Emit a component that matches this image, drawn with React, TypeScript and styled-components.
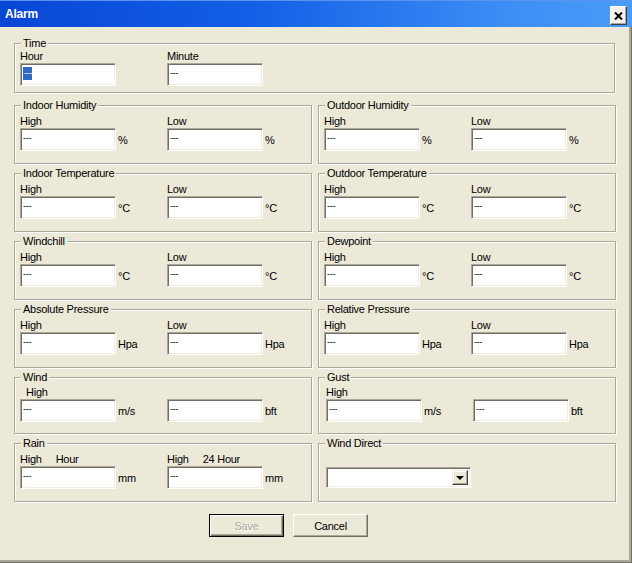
import React from 'react';
import styled, {createGlobalStyle} from 'styled-components';

const GlobalStyle = createGlobalStyle`
  html, body {
    margin: 0;
    padding: 0;
    background: #ECE9D8;
  }
  body {
    font-family: "Liberation Sans", Arial, sans-serif;
    font-size: 11px;
    letter-spacing: -0.25px;
    color: #000;
  }
`

const Window = styled.div`
  width: 632px;
  height: 563px;
  display: flex;
  flex-direction: column;
  background: #ECE9D8;
`

const TitleBar = styled.div`
  height: 27px;
  flex: none;
  display: flex;
  align-items: center;
  justify-content: space-between;
  padding: 0 5px 0 5px;
  box-sizing: border-box;
  background: linear-gradient(to right, #0846d4 0%, #1260e6 40%, #3b8ef5 80%, #4b9cf8 100%);
  box-shadow: inset 0 1px 0 #5b94f0;
`

const Title = styled.span`
  color: #fff;
  font-weight: bold;
  font-size: 12px;
  letter-spacing: -0.2px;
`

const CloseButton = styled.div`
  width: 17px;
  height: 19px;
  margin-top: 4px;
  box-sizing: border-box;
  background: #F4F2EA;
  border: 1px solid;
  border-color: #fff #404040 #404040 #fff;
  box-shadow: inset -1px -1px 0 #ACA899;
  display: flex;
  align-items: center;
  justify-content: center;
`

const Body = styled.div`
  flex: 1;
  padding: 16px 17px 0 14px;
  box-shadow: inset -1px -1px 0 #716F64, inset -3px -3px 0 #ACA899;
`

const Group = styled.div<{h: number; pt: number; pl?: number}>`
  position: relative;
  box-sizing: border-box;
  height: ${p => p.h}px;
  border: 1px solid #ACA899;
  box-shadow: inset 1px 1px 0 #fff, 1px 1px 0 #fff;
  padding: ${p => p.pt}px 0 0 ${p => p.pl ?? 5}px;
`

const Legend = styled.span`
  position: absolute;
  top: -7px;
  left: 6px;
  padding: 0 2px;
  line-height: 13px;
  background: #ECE9D8;
  color: #000;
`

const Grid = styled.div`
  display: grid;
  grid-template-columns: 298px 298px;
  column-gap: 6px;
  row-gap: 9px;
  margin-top: 12px;
`

const Fields = styled.div`
  display: grid;
  grid-template-columns: 147px 1fr;
`

const Label = styled.div<{indent?: number}>`
  height: 13px;
  line-height: 13px;
  padding-left: ${p => p.indent ?? 0}px;
  white-space: pre;
`

const InputRow = styled.div`
  display: flex;
  align-items: center;
`

const TextBox = styled.div<{w?: number}>`
  width: ${p => p.w ?? 96}px;
  height: 23px;
  box-sizing: border-box;
  background: #fff;
  border: 1px solid;
  border-color: #ACA899 #fff #fff #ACA899;
  box-shadow: inset 1px 1px 0 #716F64, inset -1px -1px 0 #F1EFE2;
  padding: 3px 0 0 2px;
  line-height: 13px;
  letter-spacing: -0.3px;
  font-size: 9px;
  flex: none;
`

const Selected = styled.span`
  display: inline-block;
  height: 13px;
  background: #316AC5;
  color: #fff;
  padding: 0 0 0 1px;
`

const Unit = styled.span`
  padding: 1px 0 0 2px;
  font-size: 11px;
`

const Combo = styled.div`
  width: 145px;
  height: 21px;
  margin-top: 23px;
  box-sizing: border-box;
  background: #fff;
  border: 1px solid;
  border-color: #ACA899 #fff #fff #ACA899;
  box-shadow: inset 1px 1px 0 #716F64, inset -1px -1px 0 #F1EFE2;
  display: flex;
  justify-content: flex-end;
  padding: 2px;
`

const ComboButton = styled.div`
  width: 16px;
  box-sizing: border-box;
  background: #ECE9D8;
  border: 1px solid;
  border-color: #F1EFE2 #404040 #404040 #F1EFE2;
  box-shadow: inset -1px -1px 0 #ACA899, inset 1px 1px 0 #fff;
  display: flex;
  align-items: center;
  justify-content: center;
`

const Arrow = styled.div`
  width: 0;
  height: 0;
  border-left: 4px solid transparent;
  border-right: 4px solid transparent;
  border-top: 4px solid #000;
`

const ButtonRow = styled.div`
  display: flex;
  gap: 9px;
  margin: 12px 0 0 195px;
`

const Button = styled.div<{primary?: boolean; disabled?: boolean}>`
  width: 75px;
  height: 23px;
  box-sizing: border-box;
  display: flex;
  align-items: center;
  justify-content: center;
  background: #ECE9D8;
  color: ${p => p.disabled ? '#ACA899' : '#000'};
  text-shadow: ${p => p.disabled ? '1px 1px 0 #fff' : 'none'};
  border: 1px solid;
  border-color: ${p => p.primary ? '#000' : '#fff #716F64 #716F64 #fff'};
  box-shadow: ${p => p.primary
    ? 'inset 1px 1px 0 #fff, inset -1px -1px 0 #716F64, inset -2px -2px 0 #ACA899'
    : 'inset -1px -1px 0 #ACA899'};
`

type FieldProps = {label: string; unit?: string; indent?: number; selected?: boolean}

const Field = ({label, unit, indent, selected}: FieldProps) => (
    <div>
        <Label indent={indent}>{label}</Label>
        <InputRow>
            <TextBox>{selected ? <Selected>---</Selected> : '---'}</TextBox>
            {unit && <Unit>{unit}</Unit>}
        </InputRow>
    </div>
)

const pairs: Array<{title: string; unit: string}> = [
    {title: 'Indoor Humidity', unit: '%'},
    {title: 'Outdoor Humidity', unit: '%'},
    {title: 'Indoor Temperature', unit: '°C'},
    {title: 'Outdoor Temperature', unit: '°C'},
    {title: 'Windchill', unit: '°C'},
    {title: 'Dewpoint', unit: '°C'},
    {title: 'Absolute Pressure', unit: 'Hpa'},
    {title: 'Relative Pressure', unit: 'Hpa'},
]

const App = () => {
    return (
        <Window>
            <GlobalStyle/>
            <TitleBar>
                <Title>Alarm</Title>
                <CloseButton>
                    <svg width="9" height="8" viewBox="0 0 9 8">
                        <path d="M1 0.5 L8 7.5 M8 0.5 L1 7.5" stroke="#000" strokeWidth="2"/>
                    </svg>
                </CloseButton>
            </TitleBar>
            <Body>
                <Group h={50} pt={6}>
                    <Legend>Time</Legend>
                    <Fields>
                        <Field label="Hour" selected/>
                        <Field label="Minute"/>
                    </Fields>
                </Group>
                <Grid>
                    {pairs.map((g, i) => (
                        <Group key={i} h={59} pt={9}>
                            <Legend>{g.title}</Legend>
                            <Fields>
                                <Field label="High" unit={g.unit}/>
                                <Field label="Low" unit={g.unit}/>
                            </Fields>
                        </Group>
                    ))}
                    <Group h={57} pt={8}>
                        <Legend>Wind</Legend>
                        <Fields>
                            <Field label="High" indent={6} unit="m/s"/>
                            <Field label=" " unit="bft"/>
                        </Fields>
                    </Group>
                    <Group h={57} pt={8} pl={7}>
                        <Legend>Gust</Legend>
                        <Fields>
                            <Field label="High" unit="m/s"/>
                            <Field label=" " unit="bft"/>
                        </Fields>
                    </Group>
                    <Group h={59} pt={9}>
                        <Legend>Rain</Legend>
                        <Fields>
                            <Field label={'High     Hour'} unit="mm"/>
                            <Field label={'High     24 Hour'} unit="mm"/>
                        </Fields>
                    </Group>
                    <Group h={59} pt={0} pl={7}>
                        <Legend>Wind Direct</Legend>
                        <Combo>
                            <ComboButton><Arrow/></ComboButton>
                        </Combo>
                    </Group>
                </Grid>
                <ButtonRow>
                    <Button primary disabled>Save</Button>
                    <Button>Cancel</Button>
                </ButtonRow>
            </Body>
        </Window>
    );
}

export default App;
